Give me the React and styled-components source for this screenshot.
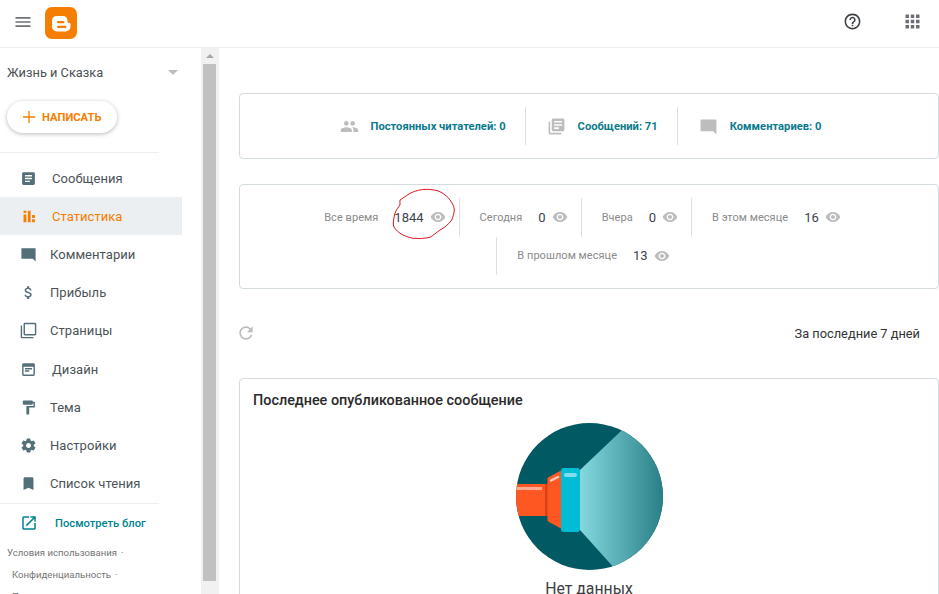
import styled, { createGlobalStyle } from 'styled-components';

const GlobalStyle = createGlobalStyle`
  html, body {
    margin: 0;
    padding: 0;
    height: 100%;
    overflow: hidden;
    background: #fff;
    font-family: Roboto, 'Liberation Sans', sans-serif;
  }
`;

const ICONS = {
  menu: 'M3 18h18v-2H3v2zm0-5h18v-2H3v2zm0-7v2h18V6H3z',
  help: 'M11 18h2v-2h-2v2zm1-16C6.48 2 2 6.48 2 12s4.48 10 10 10 10-4.48 10-10S17.52 2 12 2zm0 18c-4.41 0-8-3.59-8-8s3.59-8 8-8 8 3.59 8 8-3.59 8-8 8zm0-14c-2.21 0-4 1.79-4 4h2c0-1.1.9-2 2-2s2 .9 2 2c0 2-3 1.75-3 5h2c0-2.25 3-2.5 3-5 0-2.21-1.79-4-4-4z',
  apps: 'M4 8h4V4H4v4zm6 12h4v-4h-4v4zm-6 0h4v-4H4v4zm0-6h4v-4H4v4zm6 0h4v-4h-4v4zm6-10v4h4V4h-4zm-6 4h4V4h-4v4zm6 6h4v-4h-4v4zm0 6h4v-4h-4v4z',
  posts: 'M19 3H5c-1.1 0-2 .9-2 2v14c0 1.1.9 2 2 2h14c1.1 0 2-.9 2-2V5c0-1.1-.9-2-2-2zm-5 14H7v-2h7v2zm3-4H7v-2h10v2zm0-4H7V7h10v2z',
  stats: 'M5 9h4v11H5zM11 4h4v16h-4zM17 10h4v4h-4zM17 16h4v4h-4zM5 4h4v3H5z',
  comment: 'M22 3H2v15h16l4 4z',
  money: 'M11.8 10.9c-2.27-.59-3-1.2-3-2.15 0-1.09 1.01-1.85 2.7-1.85 1.78 0 2.44.85 2.5 2.1h2.21c-.07-1.72-1.12-3.3-3.21-3.81V3h-3v2.16c-1.94.42-3.5 1.68-3.5 3.61 0 2.31 1.91 3.46 4.7 4.13 2.5.6 3 1.48 3 2.41 0 .69-.49 1.79-2.7 1.79-2.06 0-2.87-.92-2.98-2.1h-2.2c.12 2.19 1.76 3.42 3.68 3.83V21h3v-2.15c1.95-.37 3.5-1.5 3.5-3.55 0-2.84-2.43-3.81-4.7-4.4z',
  pages: 'M3 5H1v16c0 1.1.9 2 2 2h16v-2H3V5zm18-4H7c-1.1 0-2 .9-2 2v14c0 1.1.9 2 2 2h14c1.1 0 2-.9 2-2V3c0-1.1-.9-2-2-2zm0 16H7V3h14v14z',
  design: 'M19 3H5a2 2 0 0 0-2 2v14a2 2 0 0 0 2 2h14a2 2 0 0 0 2-2V5a2 2 0 0 0-2-2zm0 16H5V8h14v11zM7 10h10v2H7zm0 3h6v2H7z',
  paint: 'M18 4V3c0-.55-.45-1-1-1H5c-.55 0-1 .45-1 1v4c0 .55.45 1 1 1h12c.55 0 1-.45 1-1V6h1v4H9v11c0 .55.45 1 1 1h2c.55 0 1-.45 1-1v-9h8V4h-3z',
  settings: 'M19.43 12.98c.04-.32.07-.64.07-.98s-.03-.66-.07-.98l2.11-1.65c.19-.15.24-.42.12-.64l-2-3.46c-.12-.22-.39-.3-.61-.22l-2.49 1c-.52-.4-1.08-.73-1.69-.98l-.38-2.65C14.46 2.18 14.25 2 14 2h-4c-.25 0-.46.18-.49.42l-.38 2.65c-.61.25-1.17.59-1.69.98l-2.49-1c-.23-.09-.49 0-.61.22l-2 3.46c-.13.22-.07.49.12.64l2.11 1.65c-.04.32-.07.65-.07.98s.03.66.07.98l-2.11 1.65c-.19.15-.24.42-.12.64l2 3.46c.12.22.39.3.61.22l2.49-1c.52.4 1.08.73 1.69.98l.38 2.65c.03.24.24.42.49.42h4c.25 0 .46-.18.49-.42l.38-2.65c.61-.25 1.17-.59 1.69-.98l2.49 1c.23.09.49 0 .61-.22l2-3.46c.12-.22.07-.49-.12-.64l-2.11-1.65zM12 15.5c-1.93 0-3.5-1.57-3.5-3.5s1.57-3.5 3.5-3.5 3.5 1.57 3.5 3.5-1.57 3.5-3.5 3.5z',
  bookmark: 'M17 3H7c-1.1 0-1.99.9-1.99 2L5 21l7-3 7 3V5c0-1.1-.9-2-2-2z',
  open: 'M19 19H5V5h7V3H5a2 2 0 0 0-2 2v14c0 1.1.9 2 2 2h14c1.1 0 2-.9 2-2v-7h-2v7zM14 3v2h3.59l-9.83 9.83 1.41 1.41L19 6.41V10h2V3h-7z',
  people: 'M16 11c1.66 0 2.99-1.34 2.99-3S17.66 5 16 5c-1.66 0-3 1.34-3 3s1.34 3 3 3zm-8 0c1.66 0 2.99-1.34 2.99-3S9.66 5 8 5C6.34 5 5 6.34 5 8s1.34 3 3 3zm0 2c-2.33 0-7 1.17-7 3.5V19h14v-2.5c0-2.33-4.67-3.5-7-3.5zm8 0c-.29 0-.62.02-.97.05 1.16.84 1.97 1.97 1.97 3.45V19h6v-2.5c0-2.33-4.67-3.5-7-3.5z',
  library: 'M4 6H2v14c0 1.1.9 2 2 2h14v-2H4V6zm16-4H8c-1.1 0-2 .9-2 2v12c0 1.1.9 2 2 2h12c1.1 0 2-.9 2-2V4c0-1.1-.9-2-2-2zm-1 9H9V9h10v2zm-4 4H9v-2h6v2zm4-8H9V5h10v2z',
  eye: 'M12 4.5C7 4.5 2.73 7.61 1 12c1.73 4.39 6 7.5 11 7.5s9.27-3.11 11-7.5c-1.73-4.39-6-7.5-11-7.5zM12 17c-2.76 0-5-2.24-5-5s2.24-5 5-5 5 2.24 5 5-2.24 5-5 5zm0-8c-1.66 0-3 1.34-3 3s1.34 3 3 3 3-1.34 3-3-1.34-3-3-3z',
  refresh: 'M17.65 6.35C16.2 4.9 14.21 4 12 4c-4.42 0-7.99 3.58-7.99 8s3.57 8 7.99 8c3.73 0 6.84-2.55 7.73-6h-2.08c-.82 2.33-3.04 4-5.65 4-3.31 0-6-2.69-6-6s2.69-6 6-6c1.66 0 3.14.69 4.22 1.78L13 11h7V4l-2.35 2.35z',
};

const navItems = [
  { icon: 'posts', label: 'Сообщения', gap: 16 },
  { icon: 'stats', label: 'Статистика', gap: 16, active: true },
  { icon: 'comment', label: 'Комментарии', gap: 14 },
  { icon: 'money', label: 'Прибыль', gap: 14 },
  { icon: 'pages', label: 'Страницы', gap: 14 },
  { icon: 'design', label: 'Дизайн', gap: 16 },
  { icon: 'paint', label: 'Тема', gap: 14 },
  { icon: 'settings', label: 'Настройки', gap: 14 },
  { icon: 'bookmark', label: 'Список чтения', gap: 14 },
];

const totals = [
  { icon: 'people', label: 'Постоянных читателей: 0' },
  { icon: 'library', label: 'Сообщений: 71' },
  { icon: 'comment', label: 'Комментариев: 0' },
];

const periods = [
  { label: 'Все время', value: '1844', circled: true },
  { label: 'Сегодня', value: '0' },
  { label: 'Вчера', value: '0' },
  { label: 'В этом месяце', value: '16' },
  { label: 'В прошлом месяце', value: '13', wrapped: true },
];

const Page = styled.div`
  display: flex;
  flex-direction: column;
  height: 100vh;
  overflow: hidden;
`;

const Header = styled.header`
  flex: none;
  box-sizing: border-box;
  height: 48px;
  display: flex;
  align-items: center;
  padding: 0 0 4px 13px;
  border-bottom: 1px solid #eeeeee;
`;

const HeaderButton = styled.div`
  flex: none;
  display: flex;
  margin-left: ${(props) => props.$left}px;
  margin-top: ${(props) => props.$top || 0}px;
`;

const HeaderIcon = styled.svg`
  flex: none;
  width: ${(props) => props.$size}px;
  height: ${(props) => props.$size}px;
  fill: ${(props) => props.$fill};
`;

const Avatar = styled.div`
  flex: none;
  width: 24px;
  height: 24px;
  margin-left: 16px;
  border-radius: 50%;
  background: #d9a066;
`;

const Body = styled.div`
  flex: 1;
  display: flex;
  min-height: 0;
`;

const Sidebar = styled.aside`
  flex: none;
  width: 201px;
  overflow: hidden;
`;

const BlogSelect = styled.div`
  display: flex;
  align-items: center;
  justify-content: space-between;
  height: 48px;
  margin-bottom: 2px;
  padding: 0 23px 0 7px;
  font-size: 12.8px;
  color: #4a4f53;
`;

const Caret = styled.span`
  width: 0;
  height: 0;
  border-left: 5px solid transparent;
  border-right: 5px solid transparent;
  border-top: 5px solid #bdbdbd;
`;

const WriteButton = styled.div`
  display: flex;
  align-items: center;
  box-sizing: border-box;
  width: 110px;
  height: 32px;
  margin: 5px 0 0 7px;
  padding-left: 16px;
  border-radius: 16px;
  background: #fff;
  box-shadow: 0 1px 4px rgba(0, 0, 0, 0.28);
  color: #f57d00;
  font-size: 11.2px;
  font-weight: 700;
`;

const Plus = styled.svg`
  width: 12px;
  height: 12px;
  margin-right: 7px;
`;

const Divider = styled.div`
  width: 159px;
  height: 1px;
  margin-top: ${(props) => props.$top}px;
  background: #eeeeee;
`;

const NavList = styled.nav`
  width: 182px;
  padding-top: 6px;
`;

const NavItem = styled.div`
  display: flex;
  align-items: center;
  height: 38.2px;
  padding-left: 20px;
  font-size: 13px;
  letter-spacing: 0.05px;
  background: ${(props) => (props.$active ? '#eceff1' : 'transparent')};
  color: ${(props) => (props.$active ? '#f57d00' : '#4b5358')};
`;

const NavIcon = styled.svg`
  flex: none;
  width: 17px;
  height: 17px;
  margin-right: ${(props) => props.$gap - 1}px;
  fill: ${(props) => (props.$active ? '#f57d00' : '#546e7a')};
`;

const ViewBlog = styled.div`
  display: flex;
  align-items: center;
  height: 39px;
  padding-left: 20px;
  color: #00838f;
  font-size: 11.2px;
  font-weight: 500;
`;

const ViewIcon = styled.svg`
  flex: none;
  width: 18px;
  height: 18px;
  margin-right: 17px;
  fill: #00838f;
`;

const LegalLink = styled.div`
  padding-left: ${(props) => props.$left}px;
  height: 22px;
  line-height: 20px;
  font-size: 9.6px;
  color: #757575;
  white-space: nowrap;
`;

const LegalDot = styled.span`
  margin-left: 4px;
`;

const Scrollbar = styled.div`
  flex: none;
  position: relative;
  width: 18px;
  background: #f1f1f1;
  padding: 16px 3px 13px 2px;
  box-sizing: border-box;
`;

const ScrollArrow = styled.span`
  position: absolute;
  top: 6px;
  left: 5px;
  width: 0;
  height: 0;
  border-left: 4px solid transparent;
  border-right: 4px solid transparent;
  border-bottom: 4px solid #a8a8a8;
`;

const ScrollThumb = styled.div`
  height: 100%;
  background: #c1c1c1;
`;

const Main = styled.main`
  flex: 1;
  min-width: 0;
  padding: 45px 0 0 20px;
  overflow: hidden;
`;

const Card = styled.section`
  box-sizing: border-box;
  width: 700px;
  border: 1px solid #d3dbde;
  border-radius: 4px;
  background: #fff;
`;

const TotalsCard = styled(Card)`
  height: 66px;
  display: flex;
  align-items: center;
  justify-content: center;
  padding-right: 19px;
`;

const Total = styled.div`
  display: flex;
  align-items: center;
  height: 38px;
  padding: 0 19px 0 21px;
  border-left: ${(props) => (props.$first ? 'none' : '1px solid #e0e0e0')};
  color: #0b7a8c;
  font-size: 11.2px;
  font-weight: 700;
`;

const TotalIcon = styled.svg`
  flex: none;
  width: 19px;
  height: 19px;
  margin-right: 12px;
  fill: #bdbdbd;
`;

const PeriodsCard = styled(Card)`
  height: 105px;
  margin-top: 25px;
  padding: 13px 20px 0 0;
  display: flex;
  flex-wrap: wrap;
  justify-content: center;
  align-content: flex-start;
`;

const Period = styled.div`
  position: relative;
  display: flex;
  align-items: center;
  height: 38.5px;
  padding: 0 13px 0 20px;
  margin-left: ${(props) => (props.$wrapped ? 21 : 0)}px;
  border-left: ${(props) => (props.$first ? 'none' : '1px solid #e0e0e0')};
`;

const PeriodLabel = styled.span`
  font-size: 11px;
  letter-spacing: 0.05px;
  color: #8a8a8a;
  margin-right: 16px;
`;

const PeriodValue = styled.span`
  font-size: 13px;
  color: #3c4250;
  margin-right: 6px;
`;

const EyeIcon = styled.svg`
  width: 16px;
  height: 16px;
  fill: #bdbdbd;
`;

const Scribble = styled.svg`
  position: absolute;
  left: 88px;
  top: -10px;
  width: 64px;
  height: 52px;
  overflow: visible;
  fill: none;
  stroke: #e0141e;
  stroke-width: 1;
`;

const RangeRow = styled.div`
  display: flex;
  align-items: center;
  justify-content: space-between;
  width: 681px;
  height: 28px;
  margin-top: 30px;
  font-size: 12.8px;
  color: #333;
`;

const RefreshIcon = styled.svg`
  width: 20px;
  height: 20px;
  margin-left: -3px;
  fill: #bdbdbd;
`;

const PostCard = styled(Card)`
  height: 300px;
  margin-top: 31px;
  padding: 13px 13px;
`;

const PostTitle = styled.h2`
  margin: 0;
  font-size: 14.4px;
  line-height: 18px;
  font-weight: 500;
  color: #2a2a2a;
`;

const EmptyState = styled.div`
  display: flex;
  flex-direction: column;
  align-items: center;
  margin-top: 13px;
`;

const EmptyText = styled.div`
  margin-top: 9px;
  font-size: 15.8px;
  color: #3c4043;
`;

function Icon({ as: Tag, name, ...rest }) {
  return (
    <Tag viewBox="0 0 24 24" {...rest}>
      <path d={ICONS[name]} />
    </Tag>
  );
}

function BloggerLogo() {
  return (
    <svg width="32" height="32" viewBox="0 0 32 32">
      <rect width="32" height="32" rx="7" fill="#f57d00" />
      <path
        d="M11.5 9h6.5a4.5 4.5 0 0 1 4.5 4.5v1a1.6 1.6 0 0 0 1.6 1.6h.4a1 1 0 0 1 1 1v2.4a5 5 0 0 1-5 5H12a5 5 0 0 1-5-5v-6a4.500 4.500 0 0 1 4.500-4.500z"
        fill="#fff"
      />
      <rect x="12" y="14" width="7.500" height="2.300" rx="1.100" fill="#f57d00" />
      <rect x="12" y="18.800" width="9.500" height="2.200" rx="1.100" fill="#f57d00" />
    </svg>
  );
}

function Flashlight() {
  return (
    <svg width="147" height="147" viewBox="0 0 147 147">
      <defs>
        <clipPath id="lens">
          <circle cx="73.500" cy="73.500" r="73.500" />
        </clipPath>
        <linearGradient id="beam" x1="0" x2="1" y1="0" y2="0">
          <stop offset="0" stopColor="#84d8de" />
          <stop offset="1" stopColor="#2a7f87" />
        </linearGradient>
      </defs>
      <g clipPath="url(#lens)">
        <rect width="147" height="147" fill="#015a63" />
        <path d="M64 47L105 8H147V147H100L64 107z" fill="url(#beam)" />
        <rect x="0" y="61" width="30" height="32" fill="#ff5722" />
        <rect x="0" y="64" width="26" height="3" fill="#ffab91" />
        <rect x="29" y="61" width="4" height="32" fill="#d84315" />
        <path d="M32 55L45 48V105L32 98z" fill="#ff5722" stroke="#ff5722" strokeLinejoin="round" />
        <path d="M35 57.500L42 54" stroke="#ffccbc" strokeWidth="2.500" strokeLinecap="round" />
        <rect x="45" y="45" width="19" height="64" rx="3" fill="#00bcd4" />
        <rect x="48" y="50" width="13" height="4" rx="2" fill="#80deea" />
      </g>
    </svg>
  );
}

function App() {
  return (
    <Page>
      <GlobalStyle />
      <Header>
        <Icon as={HeaderIcon} name="menu" $size={20} $fill="#6f7377" />
        <HeaderButton $left={12} $top={3}>
          <BloggerLogo />
        </HeaderButton>
        <HeaderButton $left={766}>
          <Icon as={HeaderIcon} name="help" $size={19} $fill="#3c4043" />
        </HeaderButton>
        <HeaderButton $left={40}>
          <Icon as={HeaderIcon} name="apps" $size={21} $fill="#6b6f73" />
        </HeaderButton>
        <Avatar />
      </Header>
      <Body>
        <Sidebar>
          <BlogSelect>
            Жизнь и Сказка
            <Caret />
          </BlogSelect>
          <WriteButton>
            <Plus viewBox="0 0 13 13">
              <path d="M5.800 0h1.400v5.800H13v1.400H7.200V13H5.800V7.200H0V5.800h5.800z" fill="#f57d00" />
            </Plus>
            НАПИСАТЬ
          </WriteButton>
          <Divider $top={19} />
          <NavList>
            {navItems.map((item) => (
              <NavItem key={item.label} $active={item.active}>
                <Icon as={NavIcon} name={item.icon} $gap={item.gap} $active={item.active} />
                {item.label}
              </NavItem>
            ))}
          </NavList>
          <Divider $top={0} />
          <ViewBlog>
            <Icon as={ViewIcon} name="open" />
            Посмотреть блог
          </ViewBlog>
          <LegalLink $left={7}>
            Условия использования<LegalDot>·</LegalDot>
          </LegalLink>
          <LegalLink $left={12}>
            Конфиденциальность<LegalDot>·</LegalDot>
          </LegalLink>
          <LegalLink $left={12}>Политика в отношении содержания</LegalLink>
        </Sidebar>
        <Scrollbar>
          <ScrollArrow />
          <ScrollThumb />
        </Scrollbar>
        <Main>
          <TotalsCard>
            {totals.map((total, i) => (
              <Total key={total.label} $first={i === 0}>
                <Icon as={TotalIcon} name={total.icon} />
                {total.label}
              </Total>
            ))}
          </TotalsCard>
          <PeriodsCard>
            {periods.map((period, i) => (
              <Period key={period.label} $first={i === 0} $wrapped={period.wrapped}>
                <PeriodLabel>{period.label}</PeriodLabel>
                <PeriodValue>{period.value}</PeriodValue>
                <Icon as={EyeIcon} name="eye" />
                {period.circled && (
                  <Scribble viewBox="0 0 64 52">
                    <path d="M8 12L18 5.300C24 2.500 29 1.300 34.700 1.300C40 1.500 44 2 48 3.700C53 6.500 56 9 58 12C61 16 62.300 19 62.300 22C62 26 61 29 59.700 32C56 37 52 40 48 42C44 45 41 47.500 38 49.300C32 50.500 27 50.800 21.300 50.300C16 49.500 12 47.500 8 45.300C4 42 2 40 1.300 37C1.200 33 2 29 3 25.300C4 22 6 19.500 8 17C8 15 7.800 13.500 8 12z" />
                  </Scribble>
                )}
              </Period>
            ))}
          </PeriodsCard>
          <RangeRow>
            <Icon as={RefreshIcon} name="refresh" />
            За последние 7 дней
          </RangeRow>
          <PostCard>
            <PostTitle>Последнее опубликованное сообщение</PostTitle>
            <EmptyState>
              <Flashlight />
              <EmptyText>Нет данных</EmptyText>
            </EmptyState>
          </PostCard>
        </Main>
      </Body>
    </Page>
  );
}

export default App;
